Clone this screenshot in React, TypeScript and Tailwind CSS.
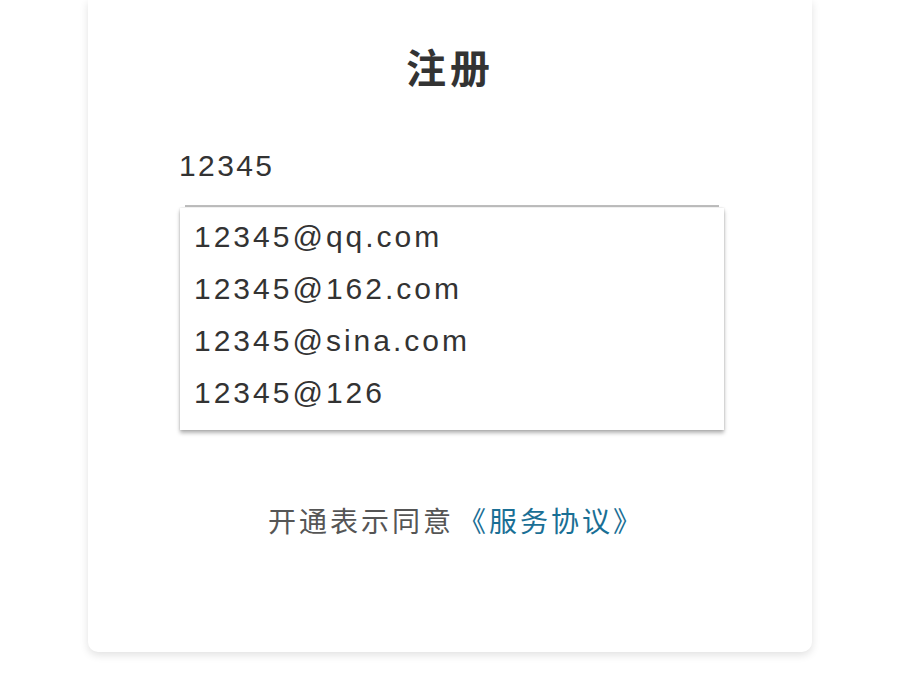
import { useState } from 'react';

const suggestions = ['12345@qq.com', '12345@162.com', '12345@sina.com', '12345@126'];

export default function App() {
  const [value] = useState('12345');

  return (
    <div className="min-h-[700px] w-full bg-white font-['Liberation_Sans','Noto_Sans_CJK_SC',sans-serif]">
      <div className="mx-auto flex h-[652px] w-[724px] flex-col rounded-b-[10px] bg-white shadow-[0_3px_8px_rgba(0,0,0,0.12)]">
        {/* Title */}
        <h1 className="mt-[40px] text-center text-[40px] font-bold leading-[52px] tracking-[4px] text-[#333] font-['Noto_Sans_CJK_SC',sans-serif]">
          注册
        </h1>

        {/* Input + suggestions */}
        <div className="mt-[55px] pl-[91px] pr-[88px]">
          <div className="h-[58px] text-[30px] leading-[38px] tracking-[2.4px] text-[#333]">
            {value}
          </div>
          <div className="ml-[6px] mr-[5px] h-[2px] bg-[#bdbdbd]" />

          <ul className="ml-[1px] mt-[1px] bg-white pt-[2px] pb-[12px] shadow-[0_3px_4px_rgba(0,0,0,0.3),0_0_2px_rgba(0,0,0,0.15)]">
            {suggestions.map((s) => (
              <li
                key={s}
                className="flex h-[52px] items-center pl-[14px] text-[30px] tracking-[3px] text-[#333]"
              >
                {s}
              </li>
            ))}
          </ul>
        </div>

        {/* Agreement */}
        <p className="mt-[72px] pl-[12px] text-center text-[28px] leading-[36px] tracking-[3px] text-[#555] font-['Noto_Sans_CJK_SC',sans-serif]">
          开通表示同意<span className="ml-[4px] text-[#1a6f95]">《服务协议》</span>
        </p>
      </div>
    </div>
  );
}
